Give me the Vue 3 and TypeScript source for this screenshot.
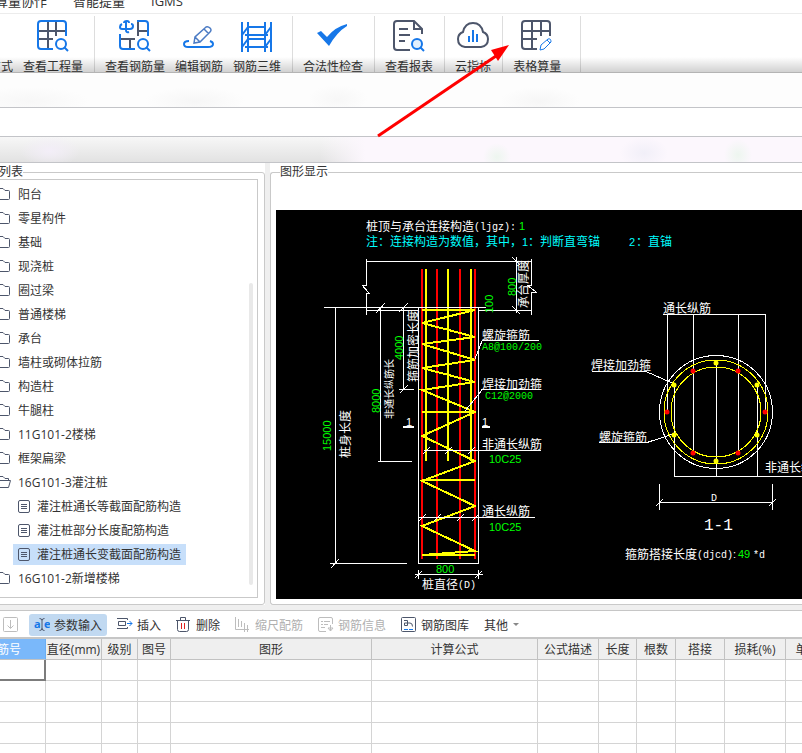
<script setup lang="ts">
import { ref } from 'vue'

interface TreeNode {
  label: string
  kind: 'folder' | 'open' | 'leaf'
}

interface Label {
  x: number
  y: number
  text: string
  tone?: 'green' | 'cyan'
  face?: 'mono' | 'digits' | 'small'
}

const menus: string[] = ['算量协作', '智能提量', 'IGMS']

const nodes: TreeNode[] = [
  { label: '阳台', kind: 'folder' },
  { label: '零星构件', kind: 'folder' },
  { label: '基础', kind: 'folder' },
  { label: '现浇桩', kind: 'folder' },
  { label: '圈过梁', kind: 'folder' },
  { label: '普通楼梯', kind: 'folder' },
  { label: '承台', kind: 'folder' },
  { label: '墙柱或砌体拉筋', kind: 'folder' },
  { label: '构造柱', kind: 'folder' },
  { label: '牛腿柱', kind: 'folder' },
  { label: '11G101-2楼梯', kind: 'folder' },
  { label: '框架扁梁', kind: 'folder' },
  { label: '16G101-3灌注桩', kind: 'open' },
  { label: '灌注桩通长等截面配筋构造', kind: 'leaf' },
  { label: '灌注桩部分长度配筋构造', kind: 'leaf' },
  { label: '灌注桩通长变截面配筋构造', kind: 'leaf' },
  { label: '16G101-2新增楼梯', kind: 'folder' },
]
const selected = ref<string>('灌注桩通长变截面配筋构造')

const columns: { label: string; cls: string }[] = [
  { label: '筋号', cls: 'c-name' },
  { label: '直径(mm)', cls: 'c-dia' },
  { label: '级别', cls: 'c-grade' },
  { label: '图号', cls: 'c-fig' },
  { label: '图形', cls: 'c-shape' },
  { label: '计算公式', cls: 'c-formula' },
  { label: '公式描述', cls: 'c-desc' },
  { label: '长度', cls: 'c-len' },
  { label: '根数', cls: 'c-count' },
  { label: '搭接', cls: 'c-lap' },
  { label: '损耗(%)', cls: 'c-loss' },
  { label: '单重(kg)', cls: 'c-weight' },
]
const rowCount = 5

const outline: string[] = [
  'M366 261.5H532M366.5 259V285L362 285L369 293H366.5V315M531.5 259V285L527 285L536 292H531.5V315',
  'M366 310.5H418M478 310.5H532M324 307.5H486',
  'M418.5 307V563.5H478.5V307',
  'M516.5 257V313M512 257L520 265M512 306L520 314',
  'M335.5 307V563M330 563.5H407M331 568L339 559',
  'M380.5 307V461M378 461.5H412M376 313L385 303',
  'M403.5 307V390M399 389.5H414M400 393L408 385M399 312L408 303',
  'M475 359L482 341M482 340.5H539',
  'M465 411L482 390M481 389.5H541',
  'M424 450.5H541M423 454L430 447M445 454L452 447M468 454L475 447',
  'M418 517.5H535M419 521L426 514M434 521L441 514M457 521L464 514M472 521L479 514',
  'M415 574.5H483M418.5 570V579M478.5 570V579M415 578L422 571M475 578L482 571',
  'M663 314.5H766M667.5 314V411M693.5 314V452M738.5 314V452M765.5 314V411',
  'M674.5 385V476M716.5 362V476M757.5 385V476M674 476.5H802',
  'M592 371.5H646L672 383M599 442.5H647L673 434',
  'M659.5 484V510M772.5 484V510M659 502.5H773M656 506L663 499M769 506L776 499',
]

const longBars: number[] = [422, 437, 460, 475]
const shortBars: number[] = [426, 448, 471]
const spiral =
  'M422 310H475L422 323L475 337L422 344L475 360L422 368L475 382L422 390L475 412L422 436L475 461L422 481L475 506L422 526L475 551L422 555'

const redDots: number[][] = [[693, 371], [738, 371], [667, 412], [765, 412], [693, 453], [738, 453]]
const yellowDots: number[][] = [[716, 363], [674, 385], [757, 385], [674, 435], [757, 435], [716, 461]]

const labels: Label[] = [
  { x: 366, y: 231, text: '桩顶与承台连接构造' },
  { x: 474, y: 230, text: '(ljgz):', face: 'mono' },
  { x: 519, y: 230, text: '1', tone: 'green', face: 'digits' },
  { x: 366, y: 246, text: '注：连接构造为数值，其中，', tone: 'cyan' },
  { x: 522, y: 246, text: '1', tone: 'cyan', face: 'digits' },
  { x: 528, y: 246, text: '：判断直弯锚', tone: 'cyan' },
  { x: 629, y: 246, text: '2', tone: 'cyan', face: 'digits' },
  { x: 636, y: 246, text: '：直锚', tone: 'cyan' },
  { x: 482, y: 340, text: '螺旋箍筋' },
  { x: 482, y: 350, text: 'A8@100/200', tone: 'green', face: 'mono' },
  { x: 482, y: 389, text: '焊接加劲箍' },
  { x: 485, y: 399, text: 'C12@2000', tone: 'green', face: 'mono' },
  { x: 482, y: 449, text: '非通长纵筋' },
  { x: 489, y: 463, text: '10C25', tone: 'green', face: 'digits' },
  { x: 482, y: 516, text: '通长纵筋' },
  { x: 489, y: 531, text: '10C25', tone: 'green', face: 'digits' },
  { x: 436, y: 573, text: '800', tone: 'green', face: 'digits' },
  { x: 422, y: 589, text: '桩直径' },
  { x: 458, y: 588, text: '(D)', face: 'mono' },
  { x: 406, y: 426, text: '1', face: 'digits' },
  { x: 482, y: 426, text: '1', face: 'digits' },
  { x: 663, y: 313, text: '通长纵筋' },
  { x: 591, y: 370, text: '焊接加劲箍' },
  { x: 599, y: 442, text: '螺旋箍筋' },
  { x: 765, y: 472, text: '非通长纵筋' },
  { x: 711, y: 501, text: 'D', face: 'mono' },
  { x: 625, y: 559, text: '箍筋搭接长度' },
  { x: 697, y: 558, text: '(djcd)', face: 'mono' },
  { x: 733, y: 558, text: ':', face: 'digits' },
  { x: 738, y: 558, text: '49', tone: 'green', face: 'digits' },
  { x: 753, y: 558, text: '*d', face: 'mono' },
]

const uprightLabels: Label[] = [
  { x: 528, y: 308, text: '承台厚度' },
  { x: 516, y: 296, text: '800', tone: 'green', face: 'digits' },
  { x: 493, y: 313, text: '100', tone: 'green', face: 'digits' },
  { x: 418, y: 382, text: '箍筋加密长度' },
  { x: 403, y: 360, text: '4000', tone: 'green', face: 'digits' },
  { x: 380, y: 413, text: '8000', tone: 'green', face: 'digits' },
  { x: 393, y: 419, text: '非通长纵筋长', face: 'small' },
  { x: 331, y: 451, text: '15000', tone: 'green', face: 'digits' },
  { x: 350, y: 458, text: '桩身长度' },
]
</script>

<template>
  <div class="app">
    <nav class="menu">
      <a v-for="m in menus" :key="m" href="#">{{ m }}</a>
    </nav>

    <div class="ribbon">
      <div class="group first">
        <button class="tool"><span class="pic"></span><span>建模方式</span></button>
        <button class="tool">
          <svg class="pic" viewBox="0 0 32 32">
            <path class="dark" d="M11 2V29M19 2V16M2 11H29M2 19H16" />
            <path class="blue" d="M16 29H4Q1 29 1 26V4Q1 1 4 1H26Q29 1 29 4V16" />
            <circle class="blue" cx="24" cy="24" r="5" /><path class="blue" d="M27 27L31 31" />
          </svg>
          <span>查看工程量</span>
        </button>
      </div>
      <div class="group">
        <button class="tool">
          <svg class="pic" viewBox="0 0 32 32">
            <path class="dark" d="M19 1V16M19 11H29M2 19H16M11 19V29" />
            <path class="blue" d="M18 1H26Q29 1 29 4V16M1 14V26Q1 29 4 29H16" />
            <path class="blue" d="M3 4Q1 5 1 7Q1 9 3 9H11Q14 9 14 6Q14 4 12 4M5 3Q5 1 8 1Q10 1 10 3M7 2V10Q7 13 10 12" />
            <circle class="blue" cx="24" cy="24" r="5" /><path class="blue" d="M27 27L31 31" />
          </svg>
          <span>查看钢筋量</span>
        </button>
        <button class="tool">
          <svg class="pic" viewBox="0 0 32 32">
            <path class="blue" d="M6 21Q1 21 1 24Q1 27 5 27H25Q30 27 30 24Q30 22 27 21" />
            <path class="slate" d="M11 23L12 17L23 7Q25 6 27 8Q29 10 27 12L17 22ZM12 17L17 22M21 9L26 14" />
          </svg>
          <span>编辑钢筋</span>
        </button>
        <button class="tool">
          <svg class="pic" viewBox="0 0 32 32">
            <path class="blue" d="M1 2V32M7 2V32M24 2V32M30 2V32M7 7H24M4 15H27M7 19H24M4 27H27M7 7L1 15M30 7L24 15M7 19L1 27M30 19L24 27" />
          </svg>
          <span>钢筋三维</span>
        </button>
      </div>
      <div class="group">
        <button class="tool">
          <svg class="pic" viewBox="0 0 32 32">
            <path fill="#1677e8" d="M0 13L4 11L10 17Q18 7 30 4V6Q20 12 12 26Z" />
          </svg>
          <span>合法性检查</span>
        </button>
      </div>
      <div class="group">
        <button class="tool">
          <svg class="pic" viewBox="0 0 32 32">
            <path class="dark" d="M17 30H4Q1 30 1 27V4Q1 1 4 1H21L29 9V14M21 1V9H29M6 9H15M6 15H17M6 21H12" />
            <circle class="blue lens" cx="24" cy="24" r="5" /><path class="blue" d="M27 27L31 31" />
          </svg>
          <span>查看报表</span>
        </button>
      </div>
      <div class="group">
        <button class="tool">
          <svg class="pic" viewBox="0 0 32 32">
            <path class="dark" d="M8 27Q1 26 1 19Q1 14 6 12Q8 3 16 3Q24 3 26 12Q31 14 31 19Q31 26 24 27Z" />
            <path class="blue" d="M12 16V22M16 10V22M20 14V22" />
          </svg>
          <span>云指标</span>
        </button>
      </div>
      <div class="group last">
        <button class="tool">
          <svg class="pic" viewBox="0 0 32 32">
            <path class="dark" d="M16 29H4Q1 29 1 26V4Q1 1 4 1H26Q29 1 29 4V16M11 2V29M20 2V16M2 11H29M2 19H16" />
            <path class="thin" d="M19 30L20 25L27 19Q30 18 30 22L23 29ZM26 20L29 23" />
          </svg>
          <span>表格算量</span>
        </button>
      </div>
    </div>

    <header class="titlebar"></header>
    <div class="strip"></div>
    <div class="haze"></div>

    <main class="work">
      <section class="side">
        <fieldset>
          <legend>图集列表</legend>
          <ul class="tree">
            <li v-for="n in nodes" :key="n.label" :class="n.kind">
              <button :class="{ on: n.label === selected }" @click="selected = n.label">
                <svg v-if="n.kind === 'leaf'" class="leaf-icon" viewBox="0 0 12 13">
                  <rect x="0.5" y="0.5" width="11" height="12" rx="1.5" />
                  <path d="M3 4.5H9M3 6.5H9M3 8.5H9" />
                </svg>
                <svg v-else class="folder-icon" viewBox="0 0 15 14">
                  <path v-if="n.kind === 'folder'" d="M1.5 12.5V1.5H7L9 3.5H12.5Q13.5 3.5 13.5 4.5V11.5Q13.5 12.5 12.5 12.5Z" />
                  <path v-else d="M1.5 12.5V1.5H7L9 3.5H12.5V5.5M1.5 12.5L3.5 5.5H14.5L12.5 12.5Z" />
                </svg>
                <span>{{ n.label }}</span>
              </button>
            </li>
            <li class="thumb" aria-hidden="true"></li>
          </ul>
        </fieldset>
      </section>

      <section class="view">
        <fieldset>
          <legend>图形显示</legend>
          <svg class="cad">
            <g transform="translate(-276 -210)">
              <g class="bars">
                <path v-for="x in longBars" :key="x" :d="`M${x} 269V559`" class="red" />
                <path v-for="x in shortBars" :key="x" :d="`M${x} 269V461`" class="yellow" />
                <path :d="spiral" class="yellow" />
                <path d="M422 412H475M422 480H475M422 555H475" class="yellow" />
              </g>
              <path v-for="d in outline" :key="d" :d="d" class="white" />
              <path d="M403 427H414M482 427H490" class="mark" />
              <circle cx="716" cy="412" r="56.5" class="ring" />
              <circle cx="716" cy="412" r="52" class="ring y" />
              <circle cx="716" cy="412" r="45" class="ring y" />
              <circle v-for="p in redDots" :key="p.join()" :cx="p[0]" :cy="p[1]" r="2.5" fill="#f00" />
              <circle v-for="p in yellowDots" :key="p.join()" :cx="p[0]" :cy="p[1]" r="2.5" fill="#ff0" />
              <text
                v-for="(l, i) in labels" :key="i" :x="l.x" :y="l.y"
                :class="[l.tone, l.face]"
              >{{ l.text }}</text>
              <text
                v-for="(l, i) in uprightLabels" :key="'u' + i"
                :transform="`translate(${l.x} ${l.y}) rotate(-90)`"
                :class="[l.tone, l.face]"
              >{{ l.text }}</text>
              <text x="704" y="530" class="section">1-1</text>
            </g>
          </svg>
        </fieldset>
      </section>
    </main>

    <div class="toolbar">
      <button disabled aria-label="下移">
        <svg viewBox="0 0 16 16"><rect x="0.5" y="0.5" width="14" height="14" rx="1" /><path d="M7.5 3V11M4.5 8.5L7.5 11.5L10.5 8.5" /></svg>
      </button>
      <button class="active">
        <svg viewBox="0 0 16 16">
          <text x="0" y="11" class="glyph">a</text><text x="10" y="11" class="glyph">e</text>
          <path d="M5.5 1.5Q8 1.5 8 3.5Q8 1.5 10.5 1.5M8 3.5V12M5.5 13.5Q8 13.5 8 11.5Q8 13.5 10.5 13.5" />
        </svg>
        <span>参数输入</span>
      </button>
      <button>
        <svg viewBox="0 0 16 16">
          <path d="M0 1.5H10.5V3M0 11.5H10.5V10M1.5 4.5H8.5V8.5H1.5Z" />
          <path class="accent" d="M10 6.5H15M12.5 4L15 6.5L12.5 9" />
        </svg>
        <span>插入</span>
      </button>
      <button>
        <svg viewBox="0 0 16 16">
          <path d="M0 3.5H14M4.5 3V0.5H9.5V3M1.5 4V12.5Q1.5 14.5 3.5 14.5H10.5Q12.5 14.5 12.5 12.5V4" />
          <path class="alert" d="M5.5 6V12M8.5 6V12" />
        </svg>
        <span>删除</span>
      </button>
      <button disabled>
        <svg viewBox="0 0 16 16"><path d="M0.5 0V12.5H14M3.5 2V10M6.5 4V10M9.5 6V15M12.5 8V15" /></svg>
        <span>缩尺配筋</span>
      </button>
      <button disabled>
        <svg viewBox="0 0 16 16"><path d="M8 14.5H2Q0.5 14.5 0.5 13V2Q0.5 0.5 2 0.5H13Q14.5 0.5 14.5 2V7M3 4.5H5M6 4.5H12M3 7.5H5M6 7.5H10M3 10.5H7M12.5 8V14M10 11L12.5 14L15 11H10" /></svg>
        <span>钢筋信息</span>
      </button>
      <button>
        <svg viewBox="0 0 16 16">
          <rect x="0.5" y="0.5" width="14" height="14" rx="1" />
          <path d="M3 3.5H6.5V8.5H3.5V6H9Q11.5 6 11.5 9.5" />
          <path class="accent" d="M3 12.5H7M8 12.5H12" />
        </svg>
        <span>钢筋图库</span>
      </button>
      <button><span>其他</span><i class="caret"></i></button>
    </div>

    <div class="sheet">
      <table>
        <colgroup><col v-for="c in columns" :key="c.cls" :class="c.cls" /></colgroup>
        <thead>
          <tr><th v-for="(c, i) in columns" :key="c.cls" scope="col" :class="{ current: i === 0 }">{{ c.label }}</th></tr>
        </thead>
        <tbody>
          <tr v-for="r in rowCount" :key="r">
            <td v-for="(c, i) in columns" :key="c.cls" :class="{ cursor: r === 1 && i === 0 }"></td>
          </tr>
        </tbody>
      </table>
    </div>

    <svg class="pointer" viewBox="0 0 134 94" aria-hidden="true">
      <path d="M2 92L120 12" stroke="#f00" stroke-width="3" />
      <path d="M133 1L115 6L122 17Z" fill="#f00" />
    </svg>
  </div>
</template>

<style>
body {
  margin: 0;
}
</style>

<style scoped>
* {
  box-sizing: border-box;
}
.app {
  position: relative;
  display: flex;
  flex-direction: column;
  height: 100vh;
  overflow: hidden;
  background: #efefef;
  color: #333;
  font: 12px/16px "Open Sans", "Noto Sans CJK SC", sans-serif;
}
button {
  margin: 0;
  border: 0;
  background: none;
  color: inherit;
  font: inherit;
  white-space: nowrap;
}
.menu {
  display: flex;
  flex: none;
  gap: 26px;
  height: 14px;
  padding-bottom: 4px;
  align-items: flex-end;
  margin-left: -5px;
  border-bottom: 1px solid #ececec;
  background: #fff;
  font-size: 13px;
}
.menu a {
  color: inherit;
  text-decoration: none;
}
.ribbon {
  position: relative;
  display: flex;
  flex: none;
  height: 59px;
  padding-top: 2px;
  overflow: hidden;
  border-bottom: 1px solid #b4b4b4;
  background: #fff;
}
.ribbon::after {
  content: "";
  position: absolute;
  inset: auto 0 0;
  height: 15px;
  background: linear-gradient(#0000, #0000002e);
}
.group {
  display: flex;
  flex: none;
  padding: 0 6px 0 5px;
  border-right: 1px solid #ddd;
}
.group.first {
  margin-left: -45px;
}
.group.last {
  padding-right: 14px;
}
.tool {
  display: flex;
  flex-direction: column;
  align-items: center;
  gap: 7px;
  padding: 4px 5px 0;
}
.pic {
  width: 32px;
  height: 32px;
  flex: none;
}
.pic path,
.pic circle {
  stroke-width: 2;
}
.pic path:not([fill]),
.pic circle {
  fill: none;
}
.pic .dark {
  stroke: #4d566b;
}
.pic .blue {
  stroke: #1677e8;
}
.pic circle.lens {
  fill: #e3f0fd;
}
.pic .slate {
  stroke: #4b7bc4;
  stroke-width: 1.5;
}
.pic .thin {
  stroke: #1677e8;
  stroke-width: 1;
}
.titlebar {
  flex: none;
  height: 35px;
  border-bottom: 1px solid #c3c4c8;
  background:
    radial-gradient(ellipse 60px 14px at 30px 28px, #f7f7f7, #f7f7f700),
    radial-gradient(ellipse 50px 14px at 195px 28px, #f6f6f6, #f6f6f600),
    radial-gradient(ellipse 30px 14px at 338px 26px, #f7f7f7, #f7f7f700),
    radial-gradient(ellipse 40px 14px at 540px 28px, #f6f6f6, #f6f6f600),
    #fdfdfd;
}
.strip {
  flex: none;
  height: 29px;
  border-bottom: 1px solid #c3c4c8;
  background: #fff;
}
.haze {
  flex: none;
  height: 26px;
  border-bottom: 1px solid #c3c4c8;
  background:
    radial-gradient(ellipse 30px 16px at 50px 14px, #f3eef8, #f3eef800),
    radial-gradient(ellipse 14px 14px at 497px 20px, #edf6ef, #edf6ef00),
    radial-gradient(ellipse 24px 16px at 644px 16px, #f1eff8, #f1eff800),
    radial-gradient(ellipse 14px 16px at 738px 18px, #edf6ef, #edf6ef00),
    linear-gradient(90deg, #fcf7fd00 320px, #fcf7fd 365px),
    linear-gradient(#f7f7f7, #e2e2e2);
}
.work {
  display: flex;
  flex: none;
  gap: 5px;
  margin-bottom: 5px;
}
.side,
.view {
  display: flex;
  padding-top: 2px;
  background: #fff;
}
.side {
  flex: none;
  width: 265px;
}
.view {
  flex: 1;
  min-width: 0;
}
fieldset {
  display: flex;
  flex: 1;
  flex-direction: column;
  min-width: 0;
  margin: 0;
  border: 1px solid #c9c9c9;
  border-radius: 3px;
}
.side fieldset {
  margin-left: -30px;
  padding: 0 6px 6px 4px;
}
.view fieldset {
  padding: 0 0 5px 5px;
  border-right: 0;
  border-radius: 3px 0 0 3px;
}
legend {
  padding: 0;
  line-height: 14px;
}
.view legend {
  margin-left: 4px;
}
.tree {
  position: relative;
  flex: 1;
  margin: 0;
  padding: 2px 0 7px;
  border: 1px solid #c9c9c9;
  list-style: none;
}
.tree li {
  display: flex;
  align-items: center;
  height: 24px;
  padding-left: 15px;
}
.tree li.leaf {
  padding-left: 37px;
}
.tree button {
  display: flex;
  align-items: center;
  gap: 7px;
  height: 21px;
  padding: 0 5px;
}
.tree span,
.toolbar span {
  padding-top: 2px;
}
.tree button.on {
  background: #c7dffa;
}
.tree svg {
  fill: none;
  stroke: #4d566b;
}
.folder-icon {
  width: 15px;
  height: 14px;
}
.leaf-icon {
  width: 12px;
  height: 13px;
}
.tree .thumb {
  position: absolute;
  top: 103px;
  right: 4px;
  bottom: 12px;
  width: 4px;
  height: auto;
  padding: 0;
  border-radius: 2px;
  background: #e9e9e9;
}
.cad {
  display: block;
  flex: 1;
  width: 100%;
  min-height: 0;
  margin-top: 31px;
  background: #000;
}
.cad path {
  fill: none;
  stroke-width: 1;
}
.cad .bars path {
  stroke-width: 2;
  shape-rendering: crispEdges;
}
.cad .red {
  stroke: #f00;
}
.cad .yellow {
  stroke: #ff0;
}
.cad .white {
  stroke: #fff;
  shape-rendering: crispEdges;
}
.cad path.mark {
  stroke: #fff;
  stroke-width: 2;
}
.cad .ring {
  fill: none;
  stroke: #fff;
  shape-rendering: crispEdges;
}
.cad .ring.y {
  stroke: #ff0;
}
.cad text {
  fill: #fff;
  font: 12px "Noto Sans CJK SC", sans-serif;
}
.cad text.small {
  font-size: 10px;
}
.cad text.mono {
  font: 10px "Liberation Mono", monospace;
}
.cad text.digits {
  font: 11px "Liberation Sans", sans-serif;
}
.cad text.green {
  fill: #0f0;
}
.cad text.cyan {
  fill: #0ff;
}
.cad text.section {
  font: 16px "Liberation Mono", monospace;
}
.toolbar {
  display: flex;
  flex: none;
  gap: 5px;
  align-items: center;
  height: 29px;
  padding-top: 1px;
  border-top: 1px solid #c6c6c6;
  border-bottom: 2px solid #c6c6c6;
  background: #fff;
}
.toolbar button {
  display: flex;
  align-items: center;
  gap: 4px;
  height: 22px;
  padding: 0 5px;
  border-radius: 3px;
}
.toolbar button:first-child {
  margin-left: -2px;
}
.toolbar button.active {
  background: #c1d9f1;
}
.toolbar button:disabled {
  color: #b0b0b0;
}
.toolbar svg {
  width: 16px;
  height: 16px;
  fill: none;
  stroke: #4d566b;
}
.toolbar button:disabled svg {
  stroke: #bdbdbd;
}
.toolbar svg .accent {
  stroke: #1677e8;
}
.toolbar svg .alert {
  stroke: #e02020;
}
.toolbar .glyph {
  fill: #1677e8;
  stroke: none;
  font: bold 11px "Open Sans", sans-serif;
}
.caret {
  margin-left: 1px;
  border: 3px solid transparent;
  border-top-color: #888;
  border-bottom: 0;
}
.sheet {
  flex: 1;
  min-height: 0;
  margin-left: -27px;
  overflow: hidden;
  background: #fff;
}
table {
  width: calc(100% + 48px);
  table-layout: fixed;
  border-collapse: separate;
  border-spacing: 0;
}
th,
td {
  height: 21px;
  padding: 0;
  border-right: 1px solid #d4d4d4;
  border-bottom: 1px solid #d4d4d4;
}
th {
  padding-top: 2px;
  border-color: #c2c2c2;
  background: #efefef;
  font-weight: 400;
  white-space: nowrap;
}
th.current {
  border-right-color: #6aaef4;
  background: #7ab8fa;
  color: #fff;
}
td.cursor {
  border-right: 2px solid #7c7c7c;
  border-bottom: 2px solid #7c7c7c;
}
.c-name { width: 73px; }
.c-dia { width: 56px; }
.c-grade { width: 36px; }
.c-fig { width: 33px; }
.c-formula { width: 166px; }
.c-desc { width: 61px; }
.c-len { width: 38px; }
.c-count { width: 39px; }
.c-lap { width: 49px; }
.c-loss { width: 61px; }
.c-weight { width: 64px; }
.pointer {
  position: absolute;
  top: 44px;
  left: 376px;
  width: 134px;
  height: 94px;
}
</style>
